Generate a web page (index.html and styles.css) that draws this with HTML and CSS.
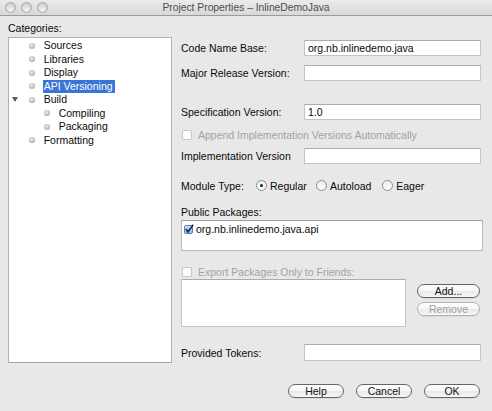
FILE: index.html
```html
<!DOCTYPE html>
<html>
<head>
<meta charset="utf-8">
<title>Project Properties</title>
<link rel="stylesheet" href="styles.css">
</head>
<body>
<div class="window">
  <header class="titlebar">
    <div class="lights"><span class="light"></span><span class="light"></span><span class="light"></span></div>
    <div class="title">Project Properties – InlineDemoJava</div>
    <div></div>
  </header>
  <main class="content">
    <section class="categories">
      <div class="cat-label">Categories:</div>
      <div class="tree">
        <div class="node"><span class="twisty"></span><span class="dot"></span><span class="name">Sources</span></div>
        <div class="node"><span class="twisty"></span><span class="dot"></span><span class="name">Libraries</span></div>
        <div class="node"><span class="twisty"></span><span class="dot"></span><span class="name">Display</span></div>
        <div class="node"><span class="twisty"></span><span class="dot"></span><span class="name selected">API Versioning</span></div>
        <div class="node"><span class="twisty"><span class="arrow"></span></span><span class="dot"></span><span class="name">Build</span></div>
        <div class="node sub"><span class="twisty"></span><span class="dot"></span><span class="name">Compiling</span></div>
        <div class="node sub"><span class="twisty"></span><span class="dot"></span><span class="name">Packaging</span></div>
        <div class="node"><span class="twisty"></span><span class="dot"></span><span class="name">Formatting</span></div>
      </div>
    </section>
    <section class="form">
      <div class="row r1"><span class="label">Code Name Base:</span><span class="field">org.nb.inlinedemo.java</span></div>
      <div class="row r2"><span class="label">Major Release Version:</span><span class="field"></span></div>
      <div class="row r3"><span class="label">Specification Version:</span><span class="field">1.0</span></div>
      <div class="check-row append"><span class="checkbox"></span><span class="disabled">Append Implementation Versions Automatically</span></div>
      <div class="row r4"><span class="label">Implementation Version</span><span class="field"></span></div>
      <div class="module-row">
        <span class="mt-label">Module Type:</span>
        <span class="option opt1"><span class="radio on"></span>Regular</span>
        <span class="option opt2"><span class="radio"></span>Autoload</span>
        <span class="option"><span class="radio"></span>Eager</span>
      </div>
      <div class="pp-label">Public Packages:</div>
      <div class="list">
        <div class="list-item">
          <svg class="checked" width="10" height="10" viewBox="0 0 10 10">
            <defs><linearGradient id="cb" x1="0" y1="0" x2="0" y2="1"><stop offset="0" stop-color="#d9e6f7"/><stop offset="1" stop-color="#8fb1e0"/></linearGradient></defs>
            <rect x="0.5" y="1.5" width="8" height="8" rx="1.2" fill="url(#cb)" stroke="#5a7db3"/>
            <path d="M2 5 L4 7.8 L9.2 0.8" fill="none" stroke="#1b2a5e" stroke-width="1.6"/>
          </svg>
          <span>org.nb.inlinedemo.java.api</span>
        </div>
      </div>
      <div class="check-row export"><span class="checkbox"></span><span class="disabled">Export Packages Only to Friends:</span></div>
      <div class="friends">
        <div class="friends-box"></div>
        <div class="side-buttons">
          <button class="btn small">Add...</button>
          <button class="btn small off">Remove</button>
        </div>
      </div>
      <div class="row tokens"><span class="label">Provided Tokens:</span><span class="field tall"></span></div>
    </section>
  </main>
  <footer class="actions">
    <button class="btn">Help</button>
    <button class="btn">Cancel</button>
    <button class="btn">OK</button>
  </footer>
</div>
</body>
</html>
```
FILE: styles.css
```css
* { box-sizing: border-box; }
html, body { margin: 0; padding: 0; }
body {
  width: 492px;
  height: 411px;
  overflow: hidden;
  background: #e8e8e8;
  font-family: "Liberation Sans", Arial, sans-serif;
  font-size: 10.5px;
  color: #0a0a0a;
}
.window { width: 492px; height: 411px; }

.titlebar {
  height: 16px;
  display: grid;
  grid-template-columns: 1fr auto 1fr;
  align-items: center;
  background: linear-gradient(#ebebeb, #d8d8d8);
  border-bottom: 1px solid #9a9a9a;
}
.lights { display: flex; gap: 5px; padding-left: 5px; }
.light {
  width: 11px; height: 11px; border-radius: 50%;
  border: 1px solid #a6a6a6;
  background: radial-gradient(circle at 50% 75%, #f6f6f6, #d4d4d4 65%, #bdbdbd);
}
.title { color: #4d4d4d; line-height: 15px; white-space: nowrap; font-size: 10.3px; }

.content { display: flex; gap: 9px; padding: 6px 9px 0 8px; }
.categories { width: 164px; flex: none; }
.cat-label { height: 13px; line-height: 13px; }
.tree {
  margin-top: 2px;
  height: 326px;
  background: #fff;
  border: 1px solid #b2b2b2;
  border-bottom-color: #a4a4a4;
  padding-top: 1px;
}
.node { display: flex; align-items: center; height: 13.5px; white-space: nowrap; }
.node.sub { padding-left: 15px; }
.twisty { width: 20px; flex: none; display: flex; align-items: center; padding-left: 3px; }
.arrow {
  width: 0; height: 0;
  border-left: 3.5px solid transparent;
  border-right: 3.5px solid transparent;
  border-top: 5px solid #5a5a5a;
}
.dot {
  width: 6px; height: 6px; border-radius: 50%; flex: none;
  margin-right: 8.7px;
  background: radial-gradient(circle at 45% 40%, #f0f0f0 0, #c6c6c6 45%, #8e8e8e 100%);
}
.name { line-height: 13.5px; }
.name.selected { background: #3875d7; color: #fff; margin-left: -1px; padding: 0 2px 0 1px; }

.form { width: 302px; flex: none; display: flex; flex-direction: column; padding-top: 18px; }
.row { display: flex; align-items: center; height: 16px; }
.label { width: 123px; flex: none; white-space: nowrap; }
.field {
  width: 177px; height: 16px; flex: none;
  background: #fff;
  border: 1px solid #c4c4c4;
  border-top-color: #acacac;
  padding: 0 3px;
  display: flex; align-items: center;
  white-space: nowrap;
}
.field.tall { height: 17px; }
.r2 { margin-top: 9px; }
.r3 { margin-top: 23px; }
.check-row { display: flex; align-items: center; height: 15px; padding-left: 1px; }
.append { margin-top: 7px; }
.checkbox {
  width: 10px; height: 10px; flex: none;
  border: 1px solid #c6c6c6; border-radius: 2px;
  background: linear-gradient(#fafafa, #fff);
  margin-right: 6px;
}
.disabled { color: #a2a2a2; white-space: nowrap; }
.r4 { margin-top: 6px; }
.module-row { display: flex; align-items: center; height: 13px; margin-top: 15px; white-space: nowrap; }
.mt-label { width: 74.7px; flex: none; }
.option { display: flex; align-items: center; flex: none; }
.opt1 { width: 60px; }
.opt2 { width: 66.3px; }
.radio {
  width: 11px; height: 11px; border-radius: 50%; flex: none;
  border: 1px solid #8c8c8c;
  background: linear-gradient(#ececec, #fff);
  margin-right: 3.3px;
  display: flex; align-items: center; justify-content: center;
}
.radio.on::after { content: ""; width: 3px; height: 3px; border-radius: 50%; background: #1e1e1e; }
.pp-label { height: 13px; line-height: 13px; margin-top: 14px; }
.list {
  margin-top: 1px; height: 31px;
  background: #fff;
  border: 1px solid #b9b9b9; border-top-color: #9f9f9f;
  padding: 1px 0 0 2px;
}
.list-item { display: flex; align-items: center; height: 14px; white-space: nowrap; }
.checked { flex: none; margin-right: 2px; margin-top: -1px; }
.export { margin-top: 14px; height: 13px; }
.friends { display: flex; margin-top: 1px; height: 48px; }
.friends-box {
  width: 225px; height: 48px;
  background: #fff;
  border: 1px solid #c4c4c4; border-top-color: #acacac;
}
.side-buttons { display: flex; flex-direction: column; gap: 4px; margin-left: 11px; padding-top: 5px; }
.btn {
  width: 56px; height: 14px; padding: 0;
  border: 1px solid #666; border-radius: 7px;
  background: linear-gradient(#ffffff, #f6f6f6 50%, #e9e9e9 55%, #f7f7f7);
  font: inherit; color: #111; line-height: 12px;
  box-shadow: 0 1px 0 rgba(0,0,0,0.06);
}
.btn.small { width: 63px; }
.btn.off { border-color: #b3b3b3; color: #a0a0a0; }
.tokens { margin-top: 17px; height: 17px; }

.actions { display: flex; justify-content: flex-end; gap: 12px; padding: 21px 12px 0 0; }
```
